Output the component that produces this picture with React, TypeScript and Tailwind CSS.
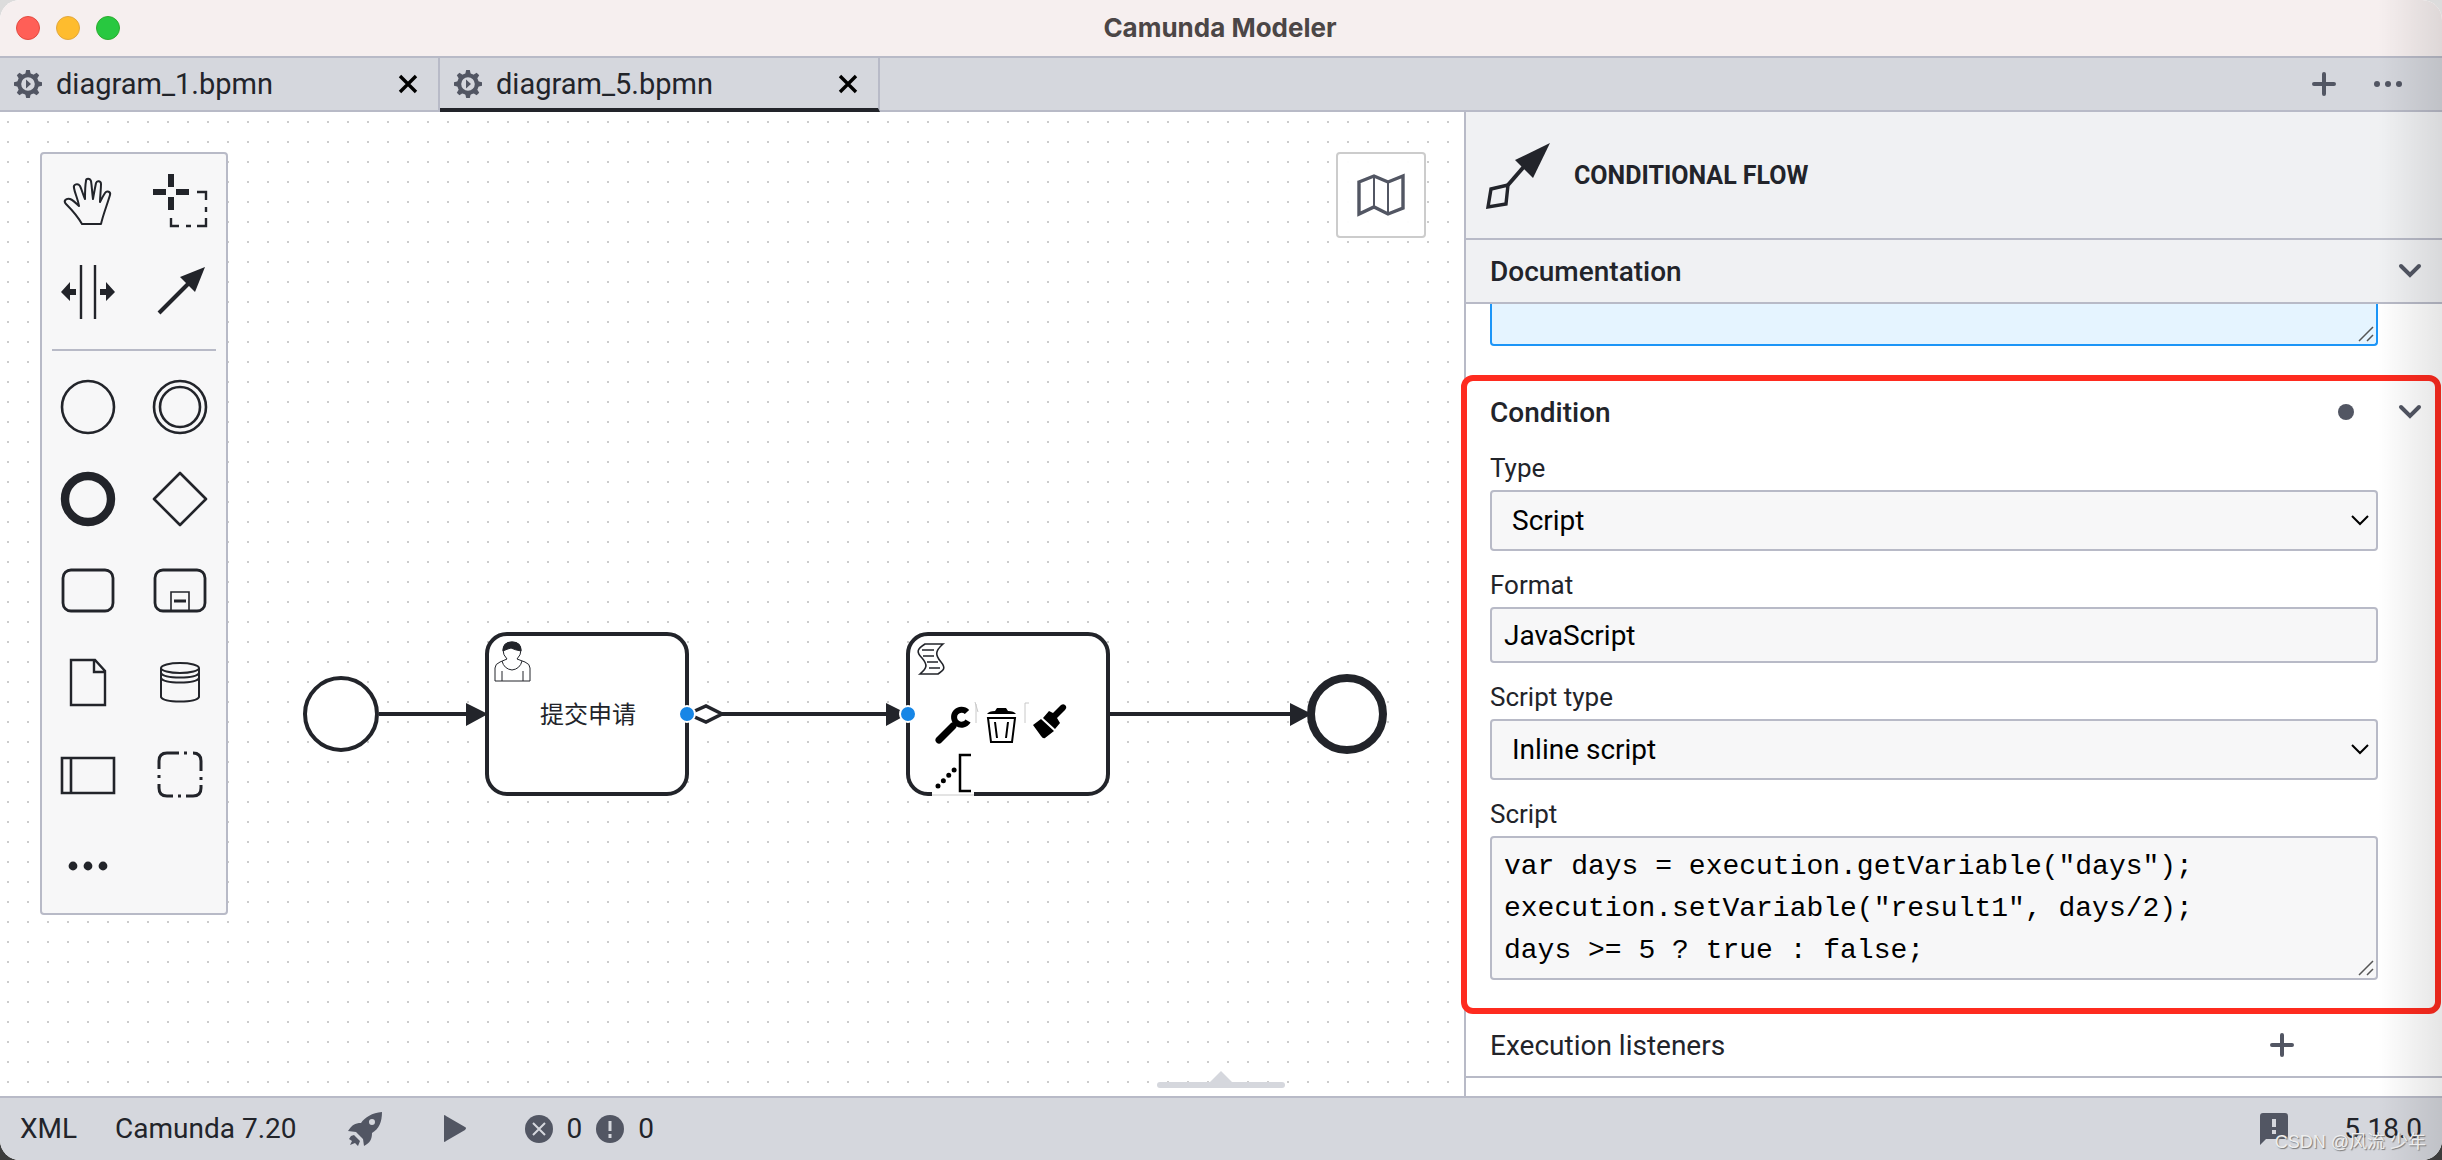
import { useState } from 'react'
import type { ReactNode } from 'react'

function GearIcon() {
  const teeth = [0, 45, 90, 135, 180, 225, 270, 315]

  return (
    <svg width="28" height="28" viewBox="0 0 28 28" className="shrink-0 text-[#525663]">
      <circle cx="14" cy="14" r="8.8" fill="none" stroke="currentColor" strokeWidth="4" />
      {teeth.map((angle) => (
        <path
          key={angle}
          d="M11 5 L12.2 0 H15.8 L17 5 Z"
          fill="currentColor"
          transform={`rotate(${angle} 14 14)`}
        />
      ))}
      <path d="M12 9.5 L17 14 L12 18.5 Z" fill="currentColor" />
    </svg>
  )
}

function ChevronIcon() {
  return (
    <svg width="24" height="24" viewBox="0 0 24 24" fill="none" stroke="#525663" strokeWidth="4" strokeLinecap="round">
      <path d="M3 7 L12 16 L21 7" />
    </svg>
  )
}

function PlusIcon() {
  return (
    <svg width="24" height="24" viewBox="0 0 24 24" fill="none" stroke="#525663" strokeWidth="4" strokeLinecap="round">
      <path d="M2 12 H22 M12 2 V22" />
    </svg>
  )
}

const paletteTools: { name: string; icon: ReactNode }[] = [
  {
    name: 'Hand tool',
    icon: (
      <path
        strokeWidth="2"
        strokeLinejoin="round"
        d="M24 54 C20 47 14 40 8 34 C5 31 8 28 12 29 C15 30 18 33 21 36 C20 29 17 24 16 18 C15 14 20 13 22 16 C24 20 25 25 27 29 C27 22 27 16 28 11 C28 8 32 8 33 11 C34 17 34 22 35 29 C36 23 37 18 38 13 C39 10 43 11 43 14 C43 20 42 26 42 32 C44 28 45 26 47 23 C49 20 53 22 52 25 C49 35 45 45 43 54 Z"
      />
    ),
  },
  {
    name: 'Lasso tool',
    icon: (
      <>
        <path strokeWidth="6" d="M21 4 V17 M21 27 V40 M3 22 H16 M26 22 H39" />
        <path strokeWidth="2.4" d="M47 22 H56 V30 M56 37 V42 M56 48 V56 H47 M41 56 H36 M29 56 H21 V48" />
      </>
    ),
  },
  {
    name: 'Space tool',
    icon: (
      <>
        <path strokeWidth="2.4" d="M23 3 V57 M37 3 V57" />
        <path fill="currentColor" stroke="none" d="M3 30 L12 20 V27 H18 V33 H12 V39 Z M57 30 L48 20 V27 H42 V33 H48 V39 Z" />
      </>
    ),
  },
  {
    name: 'Connect',
    icon: (
      <>
        <path strokeWidth="4" d="M9 51 L40 20" />
        <path fill="currentColor" stroke="none" d="M55 5 L30 15 L45 30 Z" />
      </>
    ),
  },
  { name: 'Start event', icon: <circle cx="30" cy="30" r="26" strokeWidth="2.6" /> },
  {
    name: 'Intermediate event',
    icon: (
      <>
        <circle cx="30" cy="30" r="26" strokeWidth="2.6" />
        <circle cx="30" cy="30" r="20" strokeWidth="2.6" />
      </>
    ),
  },
  { name: 'End event', icon: <circle cx="30" cy="30" r="23" strokeWidth="8.4" /> },
  { name: 'Gateway', icon: <path strokeWidth="2.6" strokeLinejoin="round" d="M30 4 L56 30 L30 56 L4 30 Z" /> },
  { name: 'Task', icon: <rect x="5" y="9" width="50" height="41" rx="8" strokeWidth="2.8" /> },
  {
    name: 'Sub-process',
    icon: (
      <>
        <rect x="5" y="9" width="50" height="41" rx="8" strokeWidth="2.8" />
        <path strokeWidth="1.6" d="M21 50 V31 H39 V50" />
        <path strokeWidth="3" d="M24 40 H36" />
      </>
    ),
  },
  {
    name: 'Data object',
    icon: <path strokeWidth="2.4" d="M13 7 H37 L47 18 V52 H13 Z M36 7 V19 H47" />,
  },
  {
    name: 'Data store',
    icon: (
      <g strokeWidth="2">
        <ellipse cx="30" cy="15" rx="19" ry="5" />
        <path d="M11 15 V44 C14 50 46 50 49 44 V15 M11 20 C14 26 46 26 49 20 M11 25 C14 31 46 31 49 25" />
      </g>
    ),
  },
  {
    name: 'Participant',
    icon: <path strokeWidth="2.6" d="M4 13 H56 V48 H4 Z M13 13 V48" />,
  },
  {
    name: 'Group',
    icon: (
      <path
        strokeWidth="3"
        d="M9 24 V16 Q9 8 17 8 H29 M34 8 H37 M43 8 Q51 8 51 16 V26 M51 32 V35 M51 40 V43 Q51 51 43 51 H36 M31 51 H28 M23 51 H17 Q9 51 9 43 V39 M9 33 V30"
      />
    ),
  },
  {
    name: 'Create element',
    icon: (
      <g fill="currentColor" stroke="none">
        <circle cx="15" cy="29" r="4.4" />
        <circle cx="30" cy="29" r="4.4" />
        <circle cx="45" cy="29" r="4.4" />
      </g>
    ),
  },
]

function PaletteButton({ name, icon }: { name: string; icon: ReactNode }) {
  return (
    <button aria-label={name} className="flex h-[92px] w-[92px] items-center justify-center text-[#22242a]">
      <svg width="60" height="60" viewBox="0 0 60 60" fill="none" stroke="currentColor">
        {icon}
      </svg>
    </button>
  )
}

function Palette() {
  return (
    <div className="absolute left-10 top-10 rounded border-2 border-[#b8bac7] bg-[#f7f7f8]">
      <div className="grid grid-cols-2">
        {paletteTools.slice(0, 4).map((tool) => (
          <PaletteButton key={tool.name} name={tool.name} icon={tool.icon} />
        ))}
      </div>
      <hr className="mx-[10px] mb-[10px] mt-[11px] border-t-2 border-[#b8bac7]" />
      <div className="grid grid-cols-2">
        {paletteTools.slice(4).map((tool) => (
          <PaletteButton key={tool.name} name={tool.name} icon={tool.icon} />
        ))}
      </div>
    </div>
  )
}

function Diagram() {
  return (
    <svg className="absolute inset-0 h-full w-full text-[#22242a]" fill="none" stroke="currentColor" strokeWidth="4">
      <g transform="translate(0 -112)">
        {/* sequence flows */}
        <path d="M379 714 H470 M722 714 H890 M1108 714 H1294" />
        <path fill="white" strokeWidth="3.5" d="M688 714 L706 706 L722 714 L706 722 Z" />

        <circle cx="341" cy="714" r="36" fill="white" />
        <rect x="487" y="634" width="200" height="160" rx="20" fill="white" />
        <rect x="908" y="634" width="200" height="160" rx="20" fill="white" />
        <circle cx="1347" cy="714" r="36" fill="white" strokeWidth="8" />
        <path fill="currentColor" stroke="none" d="M466 703 L488 714 L466 726 Z M886 703 L908 714 L886 726 Z M1290 703 L1312 714 L1290 726 Z" />

        {/* user task marker */}
        <g strokeWidth="1">
          <path d="M495 681 V668 Q495 664 500 662 L507 659 Q503 655 503 650 Q503 642 512 642 Q521 642 521 650 Q521 655 517 659 L525 662 Q530 664 530 668 V681 Z M502 661 Q504 669 512 670 Q520 669 522 661 M502 671 V681 M523 671 V681" />
          <path fill="currentColor" d="M503 651 Q503 642 512 642 Q521 642 521 651 Q515 650 511 648 Q507 649 503 651 Z" />
        </g>
        <text
          x="588"
          y="723"
          textAnchor="middle"
          fill="currentColor"
          stroke="none"
          className="font-['Liberation_Sans','Noto_Sans_CJK_SC',sans-serif] text-[24px]"
        >
          提交申请
        </text>

        {/* script task marker */}
        <path strokeWidth="1.6" d="M925 644 H943 C935 651 935 655 941 662 C946 668 944 670 938 674 H920 C927 668 928 665 922 658 C916 652 917 649 925 644 Z M922 650 H934 M923 656 H934 M927 662 H938 M929 668 H940" />

        {/* connection end points */}
        <circle cx="687" cy="714" r="8" fill="#1786e6" stroke="white" strokeWidth="2" />
        <circle cx="908" cy="714" r="8" fill="#1786e6" stroke="white" strokeWidth="2" />

        {/* context pad */}
        <g stroke="black">
          <path stroke="white" strokeWidth="6" d="M932 794 H974" />
          <path stroke="#c8c8c8" strokeWidth="1" d="M932 795 H974" />
          <path strokeWidth="7" strokeLinecap="round" d="M939 740 L953 726" />
          <path strokeWidth="6" d="M967 712 A7.5 7.5 0 1 0 968 721" />
          <path stroke="#c8c8c8" strokeWidth="1" d="M975 702 L978 712 M976 704 V723 M1025 703 V723 M1025 703 H1029" />
          <path fill="black" stroke="none" d="M987 714 Q989 711 995 711 L997 708 H1006 L1008 711 Q1014 711 1016 714 Z" />
          <path strokeWidth="2" d="M988 718 H1015 L1012 742 H991 Z M995 722 L997 738 M1008 722 L1006 738" />
          <path fill="black" stroke="none" d="M1033 725 L1041 719 L1054 731 L1045 738 Q1043 739 1041 736 Z M1043 718 L1049 711 L1053 713 L1061 705 Q1064 703 1066 706 Q1067 708 1065 710 L1057 718 L1060 723 L1055 729 Z" />
          <path strokeWidth="2.5" d="M971 755 H960 V791 H971" />
          <path strokeWidth="5" strokeLinecap="round" strokeDasharray="0 7.6" d="M938 786 L955 769" />
        </g>
      </g>
    </svg>
  )
}

function Canvas() {
  return (
    <main className="relative min-w-0 flex-1 overflow-hidden bg-white bg-[radial-gradient(circle,#cccccc_1px,transparent_1.5px)] bg-[length:20px_20px] bg-[position:-2px_0px]">
      <Diagram />
      <Palette />
      <button
        aria-label="Toggle minimap"
        className="absolute right-[38px] top-10 flex h-[86px] w-[90px] items-center justify-center rounded border-2 border-[#cccccc] bg-white/95"
      >
        <svg width="48" height="44" viewBox="0 0 48 44" fill="none" stroke="#525663">
          <path strokeWidth="3.4" d="M2 9 L17 3 L31 9 L46 3 V35 L31 41 L17 34 L2 41 Z" />
          <path strokeWidth="2" d="M17 3 V35 M31 9 V41" />
        </svg>
      </button>
      <svg className="absolute bottom-1.5 left-[1157px] h-[20px] w-[128px]" viewBox="0 0 128 20" fill="#d5d7dd">
        <rect x="0" y="12" width="128" height="6" rx="3" />
        <path d="M53 12 L64 1 L75 12 Z" />
      </svg>
    </main>
  )
}

function SectionHeader({ title, children }: { title: string; children?: ReactNode }) {
  return (
    <div className="flex h-[62px] shrink-0 items-center justify-between pl-6 pr-5">
      <h2 className="pt-0.5 text-[28px] font-medium">{title}</h2>
      <div className="flex items-center gap-11">
        {children}
        <button aria-label={`Toggle ${title}`}>
          <ChevronIcon />
        </button>
      </div>
    </div>
  )
}

function Field({ id, label, children }: { id: string; label: string; children: ReactNode }) {
  return (
    <div>
      <label htmlFor={id} className="mb-0.5 block text-[26px] leading-10">
        {label}
      </label>
      <div className="relative">{children}</div>
    </div>
  )
}

function SelectField({ id, label, options }: { id: string; label: string; options: string[] }) {
  return (
    <Field id={id} label={label}>
      <select
        id={id}
        className="block h-[61px] w-full appearance-none rounded border-2 border-[#b8bac7] bg-[#f7f7f8] px-5 text-[28px] text-black"
      >
        {options.map((option) => (
          <option key={option}>{option}</option>
        ))}
      </select>
      <svg className="pointer-events-none absolute right-2 top-5 h-5 w-5" viewBox="0 0 20 20" fill="none" stroke="black" strokeWidth="2">
        <path d="M2 6 L10 14 L18 6" />
      </svg>
    </Field>
  )
}

function ResizeGrip() {
  return (
    <svg className="pointer-events-none absolute bottom-1 right-1 h-4 w-4" viewBox="0 0 16 16" stroke="#555555" strokeWidth="1.5">
      <path d="M1 15 L15 1 M9 15 L15 9" />
    </svg>
  )
}

function PropertiesPanel() {
  const [script, setScript] = useState(
    'var days = execution.getVariable("days");\nexecution.setVariable("result1", days/2);\ndays >= 5 ? true : false;'
  )

  return (
    <aside className="relative flex w-[978px] shrink-0 flex-col border-l-2 border-[#b8bac7] bg-white">
      <div className="flex h-[128px] shrink-0 items-center gap-6 border-b-2 border-[#b8bac7] bg-[#f0f1f3] pl-5">
        <svg width="64" height="76" viewBox="0 0 64 76" className="text-[#22242a]">
          <path d="M22 48 L42 25" stroke="currentColor" strokeWidth="4" />
          <path d="M64 6 L29 23 L47 41 Z" fill="currentColor" />
          <path d="M5 52 L22 48 L20 67 L2 70 Z" fill="none" stroke="currentColor" strokeWidth="3.4" />
        </svg>
        <h1 className="pt-0.5 text-[25px] font-bold">CONDITIONAL FLOW</h1>
      </div>

      <div className="border-b-2 border-[#b8bac7] bg-[#f0f1f3]">
        <SectionHeader title="Documentation" />
      </div>
      <div className="relative ml-6 mr-16 h-[42px] shrink-0">
        <textarea
          aria-label="Element documentation"
          className="block h-full w-full resize-none rounded-b border-2 border-t-0 border-[#1c95f7] bg-[#e5f4ff]"
        />
        <ResizeGrip />
      </div>

      {/* highlighted section */}
      <section className="-ml-[5px] mr-px mt-[29px] shrink-0 rounded-xl border-[6px] border-[#fe2b1f]">
        <div className="-ml-px -mr-[7px]">
          <SectionHeader title="Condition">
            <span className="h-4 w-4 rounded-full bg-[#525663]" />
          </SectionHeader>
          <div className="flex flex-col gap-[14px] pb-7 pl-6 pr-16 pt-[5px]">
            <SelectField id="type" label="Type" options={['Script', 'Expression']} />
            <Field id="format" label="Format">
              <input
                id="format"
                defaultValue="JavaScript"
                className="block h-14 w-full rounded border-2 border-[#b8bac7] bg-[#f7f7f8] px-3 text-[28px] text-black"
              />
            </Field>
            <SelectField id="script-type" label="Script type" options={['Inline script', 'External resource']} />
            <Field id="script" label="Script">
              <textarea
                id="script"
                value={script}
                onChange={(event) => setScript(event.target.value)}
                className="block h-[144px] w-full resize-none overflow-hidden rounded border-2 border-[#b8bac7] bg-[#f7f7f8] px-3 py-2 font-['Liberation_Mono',monospace] text-[28px] leading-[42px] text-black"
              />
              <ResizeGrip />
            </Field>
          </div>
        </div>
      </section>

      <div className="flex h-16 shrink-0 items-center justify-between border-b-2 border-[#b8bac7] pl-6 pr-[148px]">
        <h2 className="pt-0.5 text-[28px]">Execution listeners</h2>
        <button aria-label="Add execution listener">
          <PlusIcon />
        </button>
      </div>
    </aside>
  )
}

function TabBar() {
  const [active, setActive] = useState('diagram_5.bpmn')

  return (
    <nav className="flex h-14 shrink-0 border-b-2 border-t-2 border-[#b8bac7] bg-[#d5d7dd]">
      {['diagram_1.bpmn', 'diagram_5.bpmn'].map((name) => (
        <div
          key={name}
          className={
            active === name
              ? '-mb-0.5 flex w-[440px] items-center border-b-4 border-r-2 border-b-[#22242a] border-r-[#b8bac7] px-[14px] pt-0.5'
              : 'flex w-[440px] items-center border-r-2 border-[#b8bac7] px-[14px]'
          }
        >
          <button onClick={() => setActive(name)} className="flex flex-1 items-center gap-[14px] text-[29px] leading-8">
            <GearIcon />
            {name}
          </button>
          <button aria-label={`Close ${name}`} className="mr-1.5">
            <svg width="20" height="20" viewBox="0 0 20 20" stroke="black" strokeWidth="3.4">
              <path d="M2 2 L18 18 M18 2 L2 18" />
            </svg>
          </button>
        </div>
      ))}
      <div className="ml-auto flex items-center gap-[38px] pr-10">
        <button aria-label="New diagram">
          <PlusIcon />
        </button>
        <button aria-label="More tabs">
          <svg width="28" height="8" viewBox="0 0 28 8" fill="#525663">
            <circle cx="3" cy="4" r="3" />
            <circle cx="14" cy="4" r="3" />
            <circle cx="25" cy="4" r="3" />
          </svg>
        </button>
      </div>
    </nav>
  )
}

function StatusBar() {
  return (
    <footer className="flex h-16 shrink-0 items-center border-t-2 border-[#b8bac7] bg-[#d5d7dd] pl-5 pr-5 text-[28px]">
      <button>XML</button>
      <button className="ml-[38px]">Camunda 7.20</button>
      <button aria-label="Deploy" className="ml-[51px]">
        <svg width="34" height="44" viewBox="0 0 34 44" fill="#525663">
          <path fillRule="evenodd" d="M34 0 C24 1 17 5 13 11 C7 11 4 13 0 19 L8 20 L15 27 L16 34 C22 31 24 27 24 21 C31 17 34 10 34 0 Z M24 7 A3 3 0 1 1 24 13 A3 3 0 1 1 24 7 Z" transform="translate(0 5)" />
          <path d="M3 24 L6 23 L12 29 L10 34 L7 31 L2 33 L4 29 L1 27 Z" transform="translate(0 5)" />
        </svg>
      </button>
      <button aria-label="Start instance" className="ml-[61px]">
        <svg width="24" height="30" viewBox="0 0 24 30" fill="#525663">
          <path d="M1 2 Q1 0 3 2 L22 13 Q24 14 22 16 L3 27 Q1 29 1 27 Z" />
        </svg>
      </button>
      <button aria-label="Problems" className="ml-[58px] flex items-center gap-[14px]">
        <svg width="28" height="28" viewBox="0 0 28 28">
          <circle cx="14" cy="14" r="14" fill="#525663" />
          <path d="M8 8 L20 20 M20 8 L8 20" stroke="#d5d7dd" strokeWidth="2" />
        </svg>
        <span>0</span>
        <svg width="28" height="28" viewBox="0 0 28 28">
          <circle cx="14" cy="14" r="14" fill="#525663" />
          <path d="M14 6 V16 M14 19 V23" stroke="#d5d7dd" strokeWidth="3" />
        </svg>
        <span>0</span>
      </button>
      <button aria-label="Feedback" className="ml-auto">
        <svg width="28" height="32" viewBox="0 0 28 32">
          <path d="M3 0 H25 Q28 0 28 3 V23 Q28 26 25 26 H6 L0 32 V3 Q0 0 3 0 Z" fill="#525663" />
          <path d="M14 6 V14 M14 17 V21" stroke="#d5d7dd" strokeWidth="4" />
        </svg>
      </button>
      <button className="ml-14">5.18.0</button>
    </footer>
  )
}

export default function App() {
  return (
    <div className="h-screen bg-linear-to-b from-[#dcdcdc] from-50% to-[#3c3c3c] to-50%">
      <div className="relative flex h-full flex-col overflow-hidden rounded-[20px] bg-white font-['Roboto','Liberation_Sans',sans-serif] text-[#22242a]">
        <header className="relative flex h-14 shrink-0 items-center justify-center bg-[#f6efef]">
          <div className="absolute left-4 flex gap-4">
            <button aria-label="Close" className="h-6 w-6 rounded-full border border-[#e24b41] bg-[#ff5f57]" />
            <button aria-label="Minimize" className="h-6 w-6 rounded-full border border-[#e1a73e] bg-[#febc2e]" />
            <button aria-label="Zoom" className="h-6 w-6 rounded-full border border-[#2dac2f] bg-[#28c840]" />
          </div>
          <span className="pb-0.5 pr-0.5 font-['Inter',sans-serif] text-[26px] font-bold text-[#4b4646]">Camunda Modeler</span>
        </header>
        <TabBar />
        <div className="flex min-h-0 flex-1">
          <Canvas />
          <PropertiesPanel />
        </div>
        <StatusBar />
        <div className="pointer-events-none absolute inset-y-0 right-0 w-16 bg-linear-to-r from-transparent to-black/10" />
        <span className="pointer-events-none absolute bottom-1 right-4 font-['Liberation_Sans','Noto_Sans_CJK_SC',sans-serif] text-[18px] text-[#eeeeee] [text-shadow:1px_1px_1px_#777777]">
          CSDN @风流 少年
        </span>
      </div>
    </div>
  )
}
